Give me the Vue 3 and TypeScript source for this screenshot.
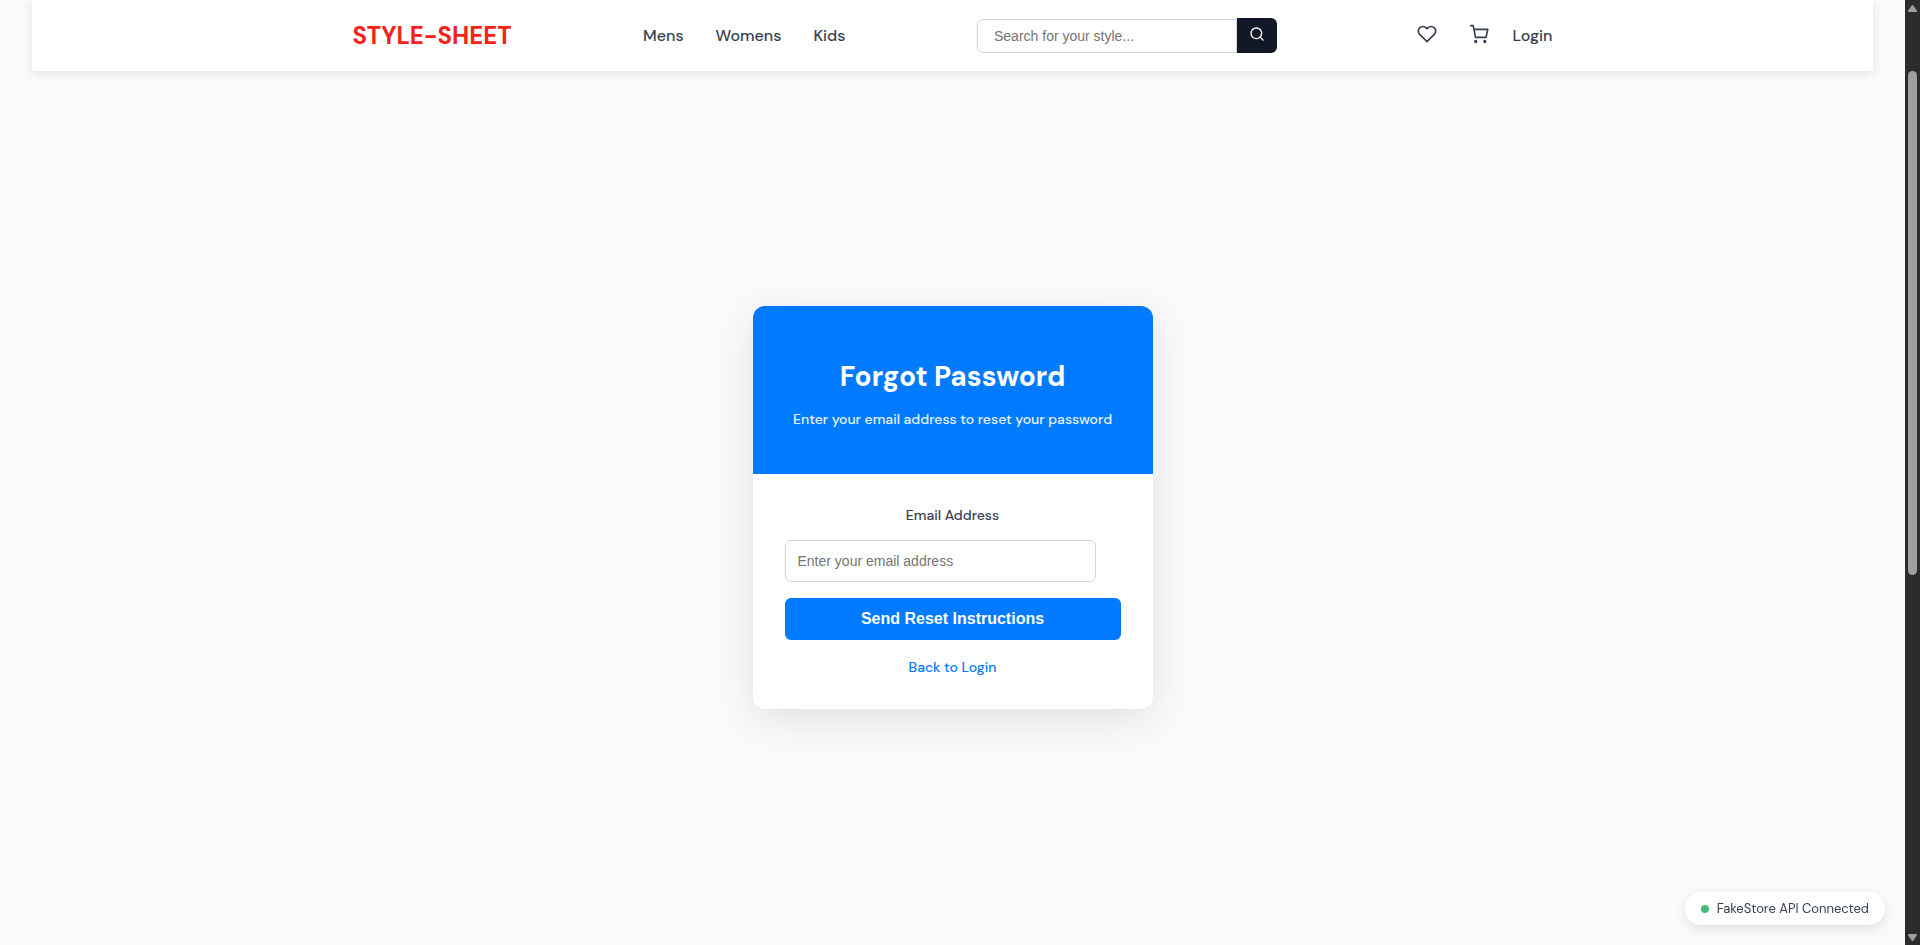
<script setup lang="ts">
import { ref } from 'vue'

const search = ref('')
const email = ref('')
const links: string[] = ['Mens', 'Womens', 'Kids']
</script>

<template>
  <div class="screen">
    <div class="page">
      <header class="header">
        <div class="bar">
          <a class="logo" href="#">STYLE-SHEET</a>
          <nav class="nav">
            <a v-for="link in links" :key="link" href="#">{{ link }}</a>
          </nav>
          <form class="search" role="search" @submit.prevent>
            <input v-model="search" type="text" aria-label="Search" placeholder="Search for your style..." />
            <button type="submit" aria-label="Search">
              <svg width="16" height="16" viewBox="0 0 24 24" fill="none" stroke="currentColor" stroke-width="2" stroke-linecap="round" stroke-linejoin="round">
                <circle cx="11" cy="11" r="8" />
                <path d="M21 21l-4.35-4.35" />
              </svg>
            </button>
          </form>
          <div class="actions">
            <a class="icon" href="#" aria-label="Wishlist">
              <svg width="20" height="20" viewBox="0 0 24 24" fill="none" stroke="currentColor" stroke-width="2" stroke-linecap="round" stroke-linejoin="round">
                <path d="M20.84 4.61a5.5 5.5 0 0 0-7.78 0L12 5.67l-1.06-1.06a5.5 5.5 0 0 0-7.78 7.78l1.06 1.06L12 21.23l7.78-7.78 1.06-1.06a5.5 5.5 0 0 0 0-7.78z" />
              </svg>
            </a>
            <a class="icon" href="#" aria-label="Cart">
              <svg width="20" height="20" viewBox="0 0 24 24" fill="none" stroke="currentColor" stroke-width="2" stroke-linecap="round" stroke-linejoin="round">
                <circle cx="8" cy="21" r="1" />
                <circle cx="19" cy="21" r="1" />
                <path d="M2 2h3l1 4.500 1.800 9.500h12.700l2-9.500H6" />
              </svg>
            </a>
            <a class="login" href="#">Login</a>
          </div>
        </div>
      </header>

      <main class="main">
        <section class="card">
          <div class="banner">
            <h1>Forgot Password</h1>
            <p>Enter your email address to reset your password</p>
          </div>
          <form class="form" @submit.prevent>
            <label for="email">Email Address</label>
            <input id="email" v-model="email" type="email" placeholder="Enter your email address" />
            <button type="submit">Send Reset Instructions</button>
            <a href="#">Back to Login</a>
          </form>
        </section>
      </main>

      <div class="status" role="status"><span class="dot"></span>FakeStore API Connected</div>
    </div>

    <div class="scrollbar" aria-hidden="true">
      <svg width="15" height="16" viewBox="0 0 15 16"><path d="M7.500 6L11 11H4z" /></svg>
      <div class="track"><div class="thumb"></div></div>
      <svg width="15" height="16" viewBox="0 0 15 16"><path d="M4 6H11L7.500 11z" /></svg>
    </div>
  </div>
</template>

<style>
body {
  margin: 0;
}
</style>

<style scoped>
.screen {
  display: flex;
  min-height: 100vh;
  font-family: "DM Sans", Inter, sans-serif;
  color: #374151;
  background: #f9fafc;
}
a {
  color: inherit;
  text-decoration: none;
}
svg {
  display: block;
}
.page {
  flex: 1;
  display: flex;
  flex-direction: column;
}
.header {
  margin: 0 32px;
  padding: 18px 16px;
  background: #fff;
  box-shadow: 0 2px 10px rgba(0, 0, 0, 0.1);
}
.bar {
  display: flex;
  align-items: center;
  justify-content: space-between;
  max-width: 1200px;
  height: 35px;
  margin: 0 auto;
}
.logo {
  font-size: 24px;
  font-weight: 700;
  color: #f62217;
}
.nav {
  display: flex;
  gap: 32px;
  font-size: 16px;
  font-weight: 500;
}
.search {
  display: flex;
  align-items: flex-end;
  width: 300px;
}
.search input {
  flex: 1;
  min-width: 0;
  box-sizing: border-box;
  height: 34px;
  padding: 0 16px;
  border: 1px solid #d1d5db;
  border-radius: 6px 0 0 6px;
  font: 14px "Liberation Sans", sans-serif;
}
input::placeholder {
  color: #757575;
}
.search button {
  width: 40px;
  height: 35px;
  padding: 0 12px 3px;
  border: 0;
  border-radius: 0 6px 6px 0;
  color: #fff;
  background: #111827;
}
.actions {
  display: flex;
  align-items: center;
  gap: 16px;
  font-size: 16px;
  font-weight: 500;
}
.icon {
  padding: 0 8px 3px;
}
.main {
  flex: 1;
  display: flex;
  align-items: center;
  justify-content: center;
  padding-bottom: 2px;
}
.card {
  width: 400px;
  overflow: hidden;
  border-radius: 12px;
  background: #fff;
  box-shadow: 0 10px 40px rgba(0, 0, 0, 0.1);
  text-align: center;
}
.banner {
  padding: 51px 32px 44px;
  color: #fff;
  background: #007bff;
}
h1 {
  margin: 0 0 11px;
  font-size: 28px;
  line-height: 40px;
}
.banner p {
  margin: 0 -16px;
  font-size: 14px;
  font-weight: 500;
  line-height: 22px;
  opacity: 0.9;
}
.form {
  display: flex;
  flex-direction: column;
  padding: 31px 32px;
}
.form label {
  font-size: 14px;
  font-weight: 500;
  line-height: 20px;
}
.form input {
  box-sizing: border-box;
  width: 311px;
  height: 42px;
  margin: 15px 0 16px;
  padding: 0 12px;
  border: 1px solid #d1d5db;
  border-radius: 6px;
  font: 14px "Liberation Sans", sans-serif;
}
.form button {
  height: 42px;
  border: 0;
  border-radius: 6px;
  color: #fff;
  background: #007bff;
  font: 700 16px "Liberation Sans", sans-serif;
}
.form a {
  align-self: center;
  margin-top: 16px;
  font-size: 14px;
  font-weight: 500;
  line-height: 22px;
  color: #007bff;
}
.status {
  position: fixed;
  right: 35px;
  bottom: 20px;
  display: flex;
  align-items: center;
  gap: 8px;
  padding: 0 16px;
  border-radius: 17px;
  font-size: 13px;
  line-height: 33px;
  background: #fff;
  box-shadow: 0 4px 12px rgba(0, 0, 0, 0.1);
}
.dot {
  width: 8px;
  height: 8px;
  border-radius: 50%;
  background: #48bb78;
}
.scrollbar {
  display: flex;
  flex-direction: column;
  width: 15px;
  background: #2c2c2c;
}
.scrollbar path {
  fill: #9f9f9f;
  stroke: #9f9f9f;
  stroke-width: 2;
  stroke-linejoin: round;
}
.track {
  flex: 1;
  padding: 55px 3px 0;
}
.thumb {
  height: 504px;
  border-radius: 5px;
  background: #9f9f9f;
}
</style>
